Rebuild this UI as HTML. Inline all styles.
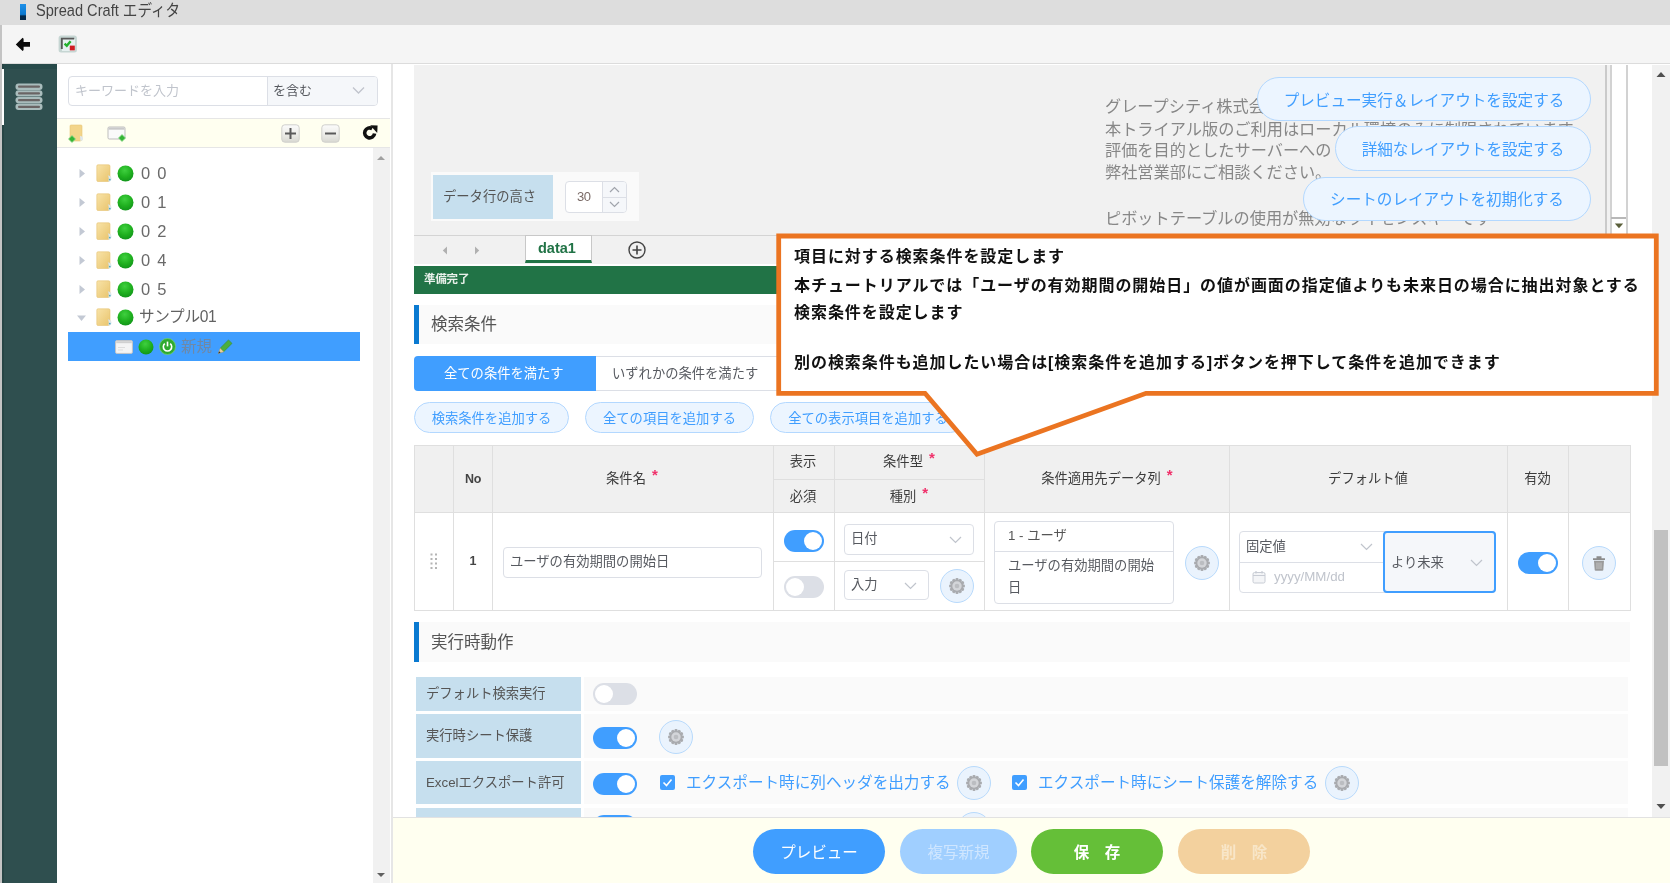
<!DOCTYPE html>
<html lang="ja">
<head>
<meta charset="utf-8">
<title>Spread Craft エディタ</title>
<style>
*{box-sizing:border-box;margin:0;padding:0}
html,body{width:1670px;height:883px;overflow:hidden;background:#fff}
body{position:relative;filter:blur(0.4px);font-family:"Liberation Sans","Noto Sans CJK JP",sans-serif;font-size:13px;color:#575a60}
.abs{position:absolute}
.t{position:absolute;white-space:nowrap;line-height:1}
/* title + toolbar */
#titlebar{left:0;top:0;width:1670px;height:25px;background:#dddddd}
#toolbar{left:0;top:25px;width:1670px;height:39px;background:#f5f5f5;border-bottom:1px solid #dcdcdc}
#sidebar{left:1.5px;top:64px;width:55.5px;height:819px;background:#2f4f4f}
#leftpanel{left:57px;top:64px;width:335.5px;height:819px;background:#fff;border-right:2.5px solid #e6e6e6}
#ytool{left:57px;top:118px;width:333px;height:30px;background:#fffff0;border-top:1px solid #e6e6e6;border-bottom:1px solid #e6e6e6}
#lscroll{left:372.5px;top:148px;width:17.5px;height:735px;background:#f1f1f1}
.pill{position:absolute;border:1px solid #b3d8ff;background:#ecf5ff;color:#409eff;border-radius:30px;text-align:center;white-space:nowrap}
.sw{position:absolute;width:40px;height:22px;border-radius:11px;background:#409eff}
.sw::after{content:"";position:absolute;top:2px;left:20px;width:18px;height:18px;border-radius:9px;background:#fff}
.sw.off{background:#dcdfe6}
.sw2{position:absolute;width:44px;height:22px;border-radius:11px;background:#409eff}
.sw2::after{content:"";position:absolute;top:2px;left:24px;width:18px;height:18px;border-radius:9px;background:#fff}
.sw2.off{background:#dcdfe6}
.sw2.off::after{left:2px}
.sw.off::after{left:2px}
.gear{position:absolute;width:34px;height:34px;border-radius:17px;border:1px solid #b8dafc;background:#eaf3fd;margin:-1px 0 0 -1px}
.co{font-size:16px;font-weight:bold;color:#111;letter-spacing:0.94px}
.inp{position:absolute;border:1px solid #dcdfe6;border-radius:4px;background:#fff}
</style>
</head>
<body>
<!-- TITLE BAR -->
<div id="titlebar" class="abs"></div>
<div class="abs" style="left:20px;top:4px;width:6px;height:16px;background:linear-gradient(#1e90e8 0,#0a78d0 65%,#04294a 75%,#04294a 100%)"></div>
<div class="t" style="left:36px;top:3px;font-size:14.6px;color:#444;transform:scaleY(1.12);transform-origin:50% 50%">Spread Craft エディタ</div>
<!-- TOOLBAR -->
<div id="toolbar" class="abs"></div>
<!-- SIDEBAR -->
<div id="sidebar" class="abs"></div>
<div id="leftpanel" class="abs"></div>
<div id="ytool" class="abs"></div>
<div id="lscroll" class="abs"></div>

<!-- left edge -->
<div class="abs" style="left:0;top:25px;width:1.5px;height:858px;background:#c4c4c4"></div>
<div class="abs" style="left:1.5px;top:63.5px;width:55.5px;height:5px;background:#274a4a"></div>
<div class="abs" style="left:1.5px;top:64px;width:2px;height:819px;background:#274545"></div>
<div class="abs" style="left:1.5px;top:69px;width:2.5px;height:56px;background:#fff"></div>
<!-- back arrow -->
<svg class="abs" style="left:14px;top:36px" width="18" height="17" viewBox="14 36 18 17"><path d="M15.8 44.4 L22.6 37.8 L23.6 38.8 L23.6 42 L30 42 L30 46.8 L23.6 46.8 L23.6 50 L22.6 51 Z" fill="#0c0c0c"/></svg>
<!-- check icon -->
<svg class="abs" style="left:58px;top:35px" width="20" height="18" viewBox="58 35 20 18">
<rect x="58.6" y="35.4" width="18.3" height="17.1" rx="2.5" fill="#c6d6d3"/>
<rect x="62" y="39" width="13" height="12" fill="#e6f0f0"/>
<path d="M61.8 49 V38.6 H74.2" fill="none" stroke="#585858" stroke-width="1.9"/>
<path d="M64.6 43.6 L66.8 45.8 L70.6 41.2" fill="none" stroke="#22b02c" stroke-width="2.4"/>
<rect x="69.8" y="45.6" width="5" height="4.8" fill="#d01c24"/>
</svg>
<!-- hamburger -->
<svg class="abs" style="left:15px;top:83px" width="28" height="28" viewBox="0 0 28 28">
<g fill="#a9bcbc"><rect x="0.5" y="0.5" width="27" height="6.4" rx="3"/><rect x="0.5" y="7.2" width="27" height="6.4" rx="3"/><rect x="0.5" y="13.9" width="27" height="6.4" rx="3"/><rect x="0.5" y="20.6" width="27" height="6.4" rx="3"/></g>
<g fill="#6a6464"><rect x="3" y="2.6" width="22" height="2.2" rx="1"/><rect x="3" y="9.3" width="22" height="2.2" rx="1"/><rect x="3" y="16" width="22" height="2.2" rx="1"/><rect x="3" y="22.7" width="22" height="2.2" rx="1"/></g>
</svg>
<!-- search box -->
<div class="inp" style="left:68px;top:76px;width:310px;height:30px;border-color:#dcdfe6"></div>
<div class="abs" style="left:267px;top:77px;width:110px;height:28px;background:#f5f7fa;border-left:1px solid #dcdfe6;border-radius:0 3px 3px 0"></div>
<div class="t" style="left:75px;top:84px;font-size:13px;color:#c0c4cc">キーワードを入力</div>
<div class="t" style="left:273px;top:84px;font-size:13px;color:#575a60">を含む</div>
<svg class="abs" style="left:352px;top:86px" width="13" height="9" viewBox="0 0 13 9"><path d="M1 1.5 L6.5 7 L12 1.5" fill="none" stroke="#c0c4cc" stroke-width="1.3"/></svg>
<!-- yellow toolbar icons -->
<svg class="abs" style="left:67px;top:124px" width="20" height="20" viewBox="0 0 20 20">
<path d="M4 1 H14 Q15 1 15 2 V15 Q15 17 13 17 H4 Q3 17 3 16 V2 Q3 1 4 1Z" fill="#f3d58a" stroke="#e8c877" stroke-width="0.6"/>
<path d="M13 12 Q16 12 16 15 Q16 17 13.5 17 Z" fill="#dfe8ee"/>
<path d="M5 11.5 L8.5 15 L5 18.5 L1.5 15 Z" fill="#35b535" stroke="#8fd88f" stroke-width="0.8"/>
</svg>
<svg class="abs" style="left:107px;top:126px" width="21" height="17" viewBox="0 0 21 17">
<rect x="1" y="1" width="17" height="12" rx="1.2" fill="#fafafa" stroke="#bdbdbd" stroke-width="1"/>
<rect x="1.5" y="1.5" width="16" height="2.2" fill="#c9c9c9"/>
<path d="M15 8.5 L18.5 12 L15 15.5 L11.5 12 Z" fill="#35b535" stroke="#8fd88f" stroke-width="0.8"/>
</svg>
<svg class="abs" style="left:281px;top:124px" width="19" height="19" viewBox="0 0 19 19"><rect x="0.8" y="0.8" width="17.4" height="17.4" rx="3" fill="url(#bg1)" stroke="#d0d0cc" stroke-width="1"/><path d="M4 9.5 H15 M9.5 4 V15" stroke="#5a5a5a" stroke-width="2"/></svg>
<svg class="abs" style="left:321px;top:124px" width="19" height="19" viewBox="0 0 19 19"><rect x="0.8" y="0.8" width="17.4" height="17.4" rx="3" fill="url(#bg1)" stroke="#d0d0cc" stroke-width="1"/><path d="M4 9.5 H15" stroke="#5a5a5a" stroke-width="2"/></svg>
<svg class="abs" style="left:361px;top:124px" width="18" height="18" viewBox="0 0 18 18"><path d="M13.6 9.6 A5 5 0 1 1 11.2 4.6" fill="none" stroke="#111" stroke-width="3.6"/><path d="M9.2 1.2 L16.6 1.6 L16.2 9 Z" fill="#111"/></svg>
<!-- left scrollbar arrows -->
<svg class="abs" style="left:376px;top:154px" width="10" height="8" viewBox="0 0 10 8"><path d="M1 6 L5 2 L9 6 Z" fill="#a0a0a0"/></svg>
<svg class="abs" style="left:376px;top:871px" width="10" height="8" viewBox="0 0 10 8"><path d="M1 2 L5 6 L9 2 Z" fill="#606060"/></svg>

<svg width="0" height="0" style="position:absolute"><defs>
<radialGradient id="gg" cx="0.45" cy="0.3" r="0.7"><stop offset="0" stop-color="#3fd03f"/><stop offset="0.6" stop-color="#1fb01f"/><stop offset="1" stop-color="#12961a"/></radialGradient>
<linearGradient id="fg" x1="0" y1="0" x2="1" y2="1"><stop offset="0" stop-color="#f8e3a8"/><stop offset="1" stop-color="#e9c46c"/></linearGradient>
<linearGradient id="bg1" x1="0" y1="0" x2="0" y2="1"><stop offset="0" stop-color="#fbfbfb"/><stop offset="0.5" stop-color="#eeeeea"/><stop offset="1" stop-color="#d8d8d2"/></linearGradient>
</defs></svg>
<svg class="abs" style="left:78px;top:168px" width="8" height="11" viewBox="0 0 8 11"><path d="M1.5 1 L1.5 10 L7 5.5 Z" fill="#c3c9d4"/></svg>
<svg class="abs" style="left:96px;top:164px" width="17" height="19" viewBox="0 0 17 19"><path d="M2 0.8 H12.5 Q14 0.8 14 2.2 V15.5 Q14 17.5 12 17.5 H2 Q0.8 17.5 0.8 16.3 V2 Q0.8 0.8 2 0.8Z" fill="url(#fg)" stroke="#e6c272" stroke-width="0.6"/><path d="M12.2 11.5 Q15.4 12 15.2 15 Q15 17.3 12.6 17.3 Q13.6 14.5 12.2 11.5Z" fill="#e3edf2" stroke="#c9d6dc" stroke-width="0.4"/><circle cx="13.8" cy="15.6" r="0.9" fill="#4aa8c8"/></svg>
<svg class="abs" style="left:117px;top:165px" width="17" height="17" viewBox="0 0 17 17"><circle cx="8.5" cy="8.5" r="8" fill="url(#gg)"/></svg>
<div class="t" style="left:141px;top:165px;font-size:16.5px;color:#6a6a6a;word-spacing:2.5px">0 0</div>
<svg class="abs" style="left:78px;top:197px" width="8" height="11" viewBox="0 0 8 11"><path d="M1.5 1 L1.5 10 L7 5.5 Z" fill="#c3c9d4"/></svg>
<svg class="abs" style="left:96px;top:193px" width="17" height="19" viewBox="0 0 17 19"><path d="M2 0.8 H12.5 Q14 0.8 14 2.2 V15.5 Q14 17.5 12 17.5 H2 Q0.8 17.5 0.8 16.3 V2 Q0.8 0.8 2 0.8Z" fill="url(#fg)" stroke="#e6c272" stroke-width="0.6"/><path d="M12.2 11.5 Q15.4 12 15.2 15 Q15 17.3 12.6 17.3 Q13.6 14.5 12.2 11.5Z" fill="#e3edf2" stroke="#c9d6dc" stroke-width="0.4"/><circle cx="13.8" cy="15.6" r="0.9" fill="#4aa8c8"/></svg>
<svg class="abs" style="left:117px;top:194px" width="17" height="17" viewBox="0 0 17 17"><circle cx="8.5" cy="8.5" r="8" fill="url(#gg)"/></svg>
<div class="t" style="left:141px;top:194px;font-size:16.5px;color:#6a6a6a;word-spacing:2.5px">0 1</div>
<svg class="abs" style="left:78px;top:226px" width="8" height="11" viewBox="0 0 8 11"><path d="M1.5 1 L1.5 10 L7 5.5 Z" fill="#c3c9d4"/></svg>
<svg class="abs" style="left:96px;top:222px" width="17" height="19" viewBox="0 0 17 19"><path d="M2 0.8 H12.5 Q14 0.8 14 2.2 V15.5 Q14 17.5 12 17.5 H2 Q0.8 17.5 0.8 16.3 V2 Q0.8 0.8 2 0.8Z" fill="url(#fg)" stroke="#e6c272" stroke-width="0.6"/><path d="M12.2 11.5 Q15.4 12 15.2 15 Q15 17.3 12.6 17.3 Q13.6 14.5 12.2 11.5Z" fill="#e3edf2" stroke="#c9d6dc" stroke-width="0.4"/><circle cx="13.8" cy="15.6" r="0.9" fill="#4aa8c8"/></svg>
<svg class="abs" style="left:117px;top:223px" width="17" height="17" viewBox="0 0 17 17"><circle cx="8.5" cy="8.5" r="8" fill="url(#gg)"/></svg>
<div class="t" style="left:141px;top:223px;font-size:16.5px;color:#6a6a6a;word-spacing:2.5px">0 2</div>
<svg class="abs" style="left:78px;top:255px" width="8" height="11" viewBox="0 0 8 11"><path d="M1.5 1 L1.5 10 L7 5.5 Z" fill="#c3c9d4"/></svg>
<svg class="abs" style="left:96px;top:251px" width="17" height="19" viewBox="0 0 17 19"><path d="M2 0.8 H12.5 Q14 0.8 14 2.2 V15.5 Q14 17.5 12 17.5 H2 Q0.8 17.5 0.8 16.3 V2 Q0.8 0.8 2 0.8Z" fill="url(#fg)" stroke="#e6c272" stroke-width="0.6"/><path d="M12.2 11.5 Q15.4 12 15.2 15 Q15 17.3 12.6 17.3 Q13.6 14.5 12.2 11.5Z" fill="#e3edf2" stroke="#c9d6dc" stroke-width="0.4"/><circle cx="13.8" cy="15.6" r="0.9" fill="#4aa8c8"/></svg>
<svg class="abs" style="left:117px;top:252px" width="17" height="17" viewBox="0 0 17 17"><circle cx="8.5" cy="8.5" r="8" fill="url(#gg)"/></svg>
<div class="t" style="left:141px;top:252px;font-size:16.5px;color:#6a6a6a;word-spacing:2.5px">0 4</div>
<svg class="abs" style="left:78px;top:284px" width="8" height="11" viewBox="0 0 8 11"><path d="M1.5 1 L1.5 10 L7 5.5 Z" fill="#c3c9d4"/></svg>
<svg class="abs" style="left:96px;top:280px" width="17" height="19" viewBox="0 0 17 19"><path d="M2 0.8 H12.5 Q14 0.8 14 2.2 V15.5 Q14 17.5 12 17.5 H2 Q0.8 17.5 0.8 16.3 V2 Q0.8 0.8 2 0.8Z" fill="url(#fg)" stroke="#e6c272" stroke-width="0.6"/><path d="M12.2 11.5 Q15.4 12 15.2 15 Q15 17.3 12.6 17.3 Q13.6 14.5 12.2 11.5Z" fill="#e3edf2" stroke="#c9d6dc" stroke-width="0.4"/><circle cx="13.8" cy="15.6" r="0.9" fill="#4aa8c8"/></svg>
<svg class="abs" style="left:117px;top:281px" width="17" height="17" viewBox="0 0 17 17"><circle cx="8.5" cy="8.5" r="8" fill="url(#gg)"/></svg>
<div class="t" style="left:141px;top:281px;font-size:16.5px;color:#6a6a6a;word-spacing:2.5px">0 5</div>
<svg class="abs" style="left:76px;top:314px" width="11" height="8" viewBox="0 0 11 8"><path d="M1 1.5 L10 1.5 L5.5 7 Z" fill="#c3c9d4"/></svg>
<svg class="abs" style="left:96px;top:308px" width="17" height="19" viewBox="0 0 17 19"><path d="M2 0.8 H12.5 Q14 0.8 14 2.2 V15.5 Q14 17.5 12 17.5 H2 Q0.8 17.5 0.8 16.3 V2 Q0.8 0.8 2 0.8Z" fill="url(#fg)" stroke="#e6c272" stroke-width="0.6"/><path d="M12.2 11.5 Q15.4 12 15.2 15 Q15 17.3 12.6 17.3 Q13.6 14.5 12.2 11.5Z" fill="#e3edf2" stroke="#c9d6dc" stroke-width="0.4"/><circle cx="13.8" cy="15.6" r="0.9" fill="#4aa8c8"/></svg>
<svg class="abs" style="left:117px;top:309px" width="17" height="17" viewBox="0 0 17 17"><circle cx="8.5" cy="8.5" r="8" fill="url(#gg)"/></svg>
<div class="t" style="left:139px;top:309px;font-size:15.6px;color:#626262;letter-spacing:-0.3px">サンプル01</div>

<div class="abs" style="left:68px;top:332px;width:292px;height:29px;background:#409eff"></div>
<svg class="abs" style="left:115px;top:340px" width="18" height="14" viewBox="0 0 18 14"><rect x="0.6" y="0.6" width="16.8" height="12.8" rx="1.2" fill="#f4f4f4" stroke="#c4c4c4" stroke-width="1"/><rect x="1.2" y="1.2" width="15.6" height="2" fill="#d0d0d0"/><path d="M3 7.5 H10 M3 10 H8" stroke="#ddd" stroke-width="1"/></svg>
<svg class="abs" style="left:138px;top:339px" width="16" height="16" viewBox="0 0 16 16"><circle cx="8" cy="8" r="7.5" fill="url(#gg)"/></svg>
<svg class="abs" style="left:159px;top:338px" width="17" height="17" viewBox="0 0 17 17"><circle cx="8.5" cy="8.5" r="8" fill="#2faa2f" stroke="#6fd06f" stroke-width="0.8"/><path d="M5.8 5.6 A4.2 4.2 0 1 0 11.2 5.6" fill="none" stroke="#fff" stroke-width="1.6"/><path d="M8.5 3.6 V8.4" stroke="#fff" stroke-width="1.6"/></svg>
<div class="t" style="left:181px;top:339px;font-size:15.5px;color:#6f88a6">新規</div>
<svg class="abs" style="left:216px;top:337px" width="19" height="19" viewBox="0 0 19 19"><path d="M4.2 11.2 L12.5 2.9 L16 6.4 L7.7 14.7 Z" fill="#4caf3c" stroke="#3a8a2e" stroke-width="0.6"/><path d="M4.2 11.2 L7.7 14.7 L2.3 16.6 Z" fill="#e8cf9a" stroke="#b89a5a" stroke-width="0.5"/><path d="M2.3 16.6 L3.1 14.3 L4.6 15.8 Z" fill="#333"/></svg>


<!-- spread area -->
<div class="abs" style="left:414px;top:65px;width:1192px;height:170px;background:#f1f1f1"></div>
<div class="abs" style="left:1605px;top:65px;width:2px;height:170px;background:#cacaca"></div>
<div class="abs" style="left:1607px;top:65px;width:3px;height:170px;background:#f1f1f1"></div>
<div class="abs" style="left:1609.5px;top:65px;width:18px;height:170px;background:#fff;border-left:2px solid #d2d2d2;border-right:2px solid #d2d2d2"></div>
<div class="abs" style="left:1611px;top:217px;width:15px;height:2px;background:#b8b8b8"></div>
<svg class="abs" style="left:1614px;top:223px" width="10" height="6" viewBox="0 0 10 6"><path d="M0.8 0.5 L9.2 0.5 L5 5.3 Z" fill="#5a5f3a"/></svg>
<!-- gray text -->
<div class="t" style="left:1105px;top:98px;font-size:16.2px;color:#878787">グレープシティ株式会社</div>
<div class="t" style="left:1105px;top:120.5px;font-size:16.2px;color:#878787">本トライアル版のご利用はローカル環境のみに制限されています。</div>
<div class="t" style="left:1105px;top:142px;font-size:16.2px;color:#878787">評価を目的としたサーバーへの</div>
<div class="t" style="left:1105px;top:164px;font-size:16.2px;color:#878787">弊社営業部にご相談ください。</div>
<div class="t" style="left:1105px;top:209.5px;font-size:16.2px;color:#878787">ピボットテーブルの使用が無効なライセンスキーです</div>
<!-- right pills -->
<div class="pill" style="left:1257px;top:77px;width:334px;height:44px;line-height:45px;font-size:15.6px">プレビュー実行＆レイアウトを設定する</div>
<div class="pill" style="left:1335px;top:126px;width:256px;height:45px;line-height:45px;font-size:15.6px">詳細なレイアウトを設定する</div>
<div class="pill" style="left:1303px;top:177px;width:288px;height:44px;line-height:44px;font-size:15.6px">シートのレイアウトを初期化する</div>
<!-- data row height -->
<div class="abs" style="left:431px;top:172px;width:208px;height:49px;background:#fafafa"></div>
<div class="abs" style="left:433px;top:175px;width:120px;height:44px;background:#c6dfee"></div>
<div class="t" style="left:443px;top:190px;font-size:13.3px;color:#555">データ行の高さ</div>
<div class="inp" style="left:565px;top:181px;width:62px;height:32px"></div>
<div class="abs" style="left:602px;top:182px;width:24px;height:30px;background:#f5f7fa;border-left:1px solid #dcdfe6;border-radius:0 3px 3px 0"></div>
<div class="abs" style="left:603px;top:197px;width:23px;height:1px;background:#dcdfe6"></div>
<div class="t" style="left:577px;top:190px;font-size:13px;color:#7a6a66;letter-spacing:-0.5px">30</div>
<svg class="abs" style="left:609px;top:186px" width="11" height="7" viewBox="0 0 11 7"><path d="M1 6 L5.5 1.5 L10 6" fill="none" stroke="#a0a4ac" stroke-width="1.2"/></svg>
<svg class="abs" style="left:609px;top:201px" width="11" height="7" viewBox="0 0 11 7"><path d="M1 1 L5.5 5.5 L10 1" fill="none" stroke="#a0a4ac" stroke-width="1.2"/></svg>
<!-- tab strip -->
<div class="abs" style="left:414px;top:235px;width:365px;height:29px;background:#f1f1f1;border-top:1px solid #d4d4d4"></div>
<svg class="abs" style="left:442px;top:246px" width="6" height="9" viewBox="0 0 6 9"><path d="M5 0.5 L5 8.5 L0.8 4.5 Z" fill="#b0b0b0"/></svg>
<svg class="abs" style="left:474px;top:246px" width="6" height="9" viewBox="0 0 6 9"><path d="M1 0.5 L1 8.5 L5.2 4.5 Z" fill="#b0b0b0"/></svg>
<div class="abs" style="left:525px;top:235px;width:67px;height:28px;background:#fff;border:1px solid #c8c8c8;border-bottom:3px solid #217346"></div>
<div class="t" style="left:538px;top:241px;font-size:14.5px;font-weight:bold;color:#217346;letter-spacing:0">data1</div>
<svg class="abs" style="left:627px;top:240px" width="20" height="20" viewBox="0 0 20 20"><circle cx="10" cy="10" r="8" fill="none" stroke="#444" stroke-width="1.4"/><path d="M5.5 10 H14.5 M10 5.5 V14.5" stroke="#444" stroke-width="1.6"/></svg>
<!-- status bar -->
<div class="abs" style="left:414px;top:265.5px;width:365px;height:28px;background:#217346"></div>
<div class="t" style="left:424px;top:274px;font-size:11.5px;font-weight:bold;color:#e8f0ea;letter-spacing:-0.2px">準備完了</div>

<!-- section: search cond -->
<div class="abs" style="left:414px;top:305px;width:1216px;height:39px;background:#fafafa"></div>
<div class="abs" style="left:414px;top:305px;width:5px;height:39px;background:#0a7ad1"></div>
<div class="t" style="left:431px;top:316px;font-size:16.5px;color:#555">検索条件</div>
<!-- radio group -->
<div class="abs" style="left:414px;top:356px;width:182px;height:35px;background:#409eff;border-radius:4px 0 0 4px"></div>
<div class="t" style="left:444px;top:367px;font-size:13.3px;color:#fff">全ての条件を満たす</div>
<div class="abs" style="left:596px;top:356px;width:184px;height:35px;background:#fff;border:1px solid #dcdfe6;border-left:0;border-radius:0 4px 4px 0"></div>
<div class="t" style="left:612px;top:367px;font-size:13.3px;color:#575a60">いずれかの条件を満たす</div>
<!-- pills -->
<div class="pill" style="left:414px;top:402px;width:155px;height:31px;line-height:31px;font-size:13.3px">検索条件を追加する</div>
<div class="pill" style="left:585px;top:402px;width:169px;height:31px;line-height:31px;font-size:13.3px">全ての項目を追加する</div>
<div class="pill" style="left:770px;top:402px;width:196px;height:31px;line-height:31px;font-size:13.3px">全ての表示項目を追加する</div>
<!-- table -->
<div class="abs" style="left:414px;top:445px;width:1216px;height:68px;background:#f0f0f0"></div>
<div class="abs" style="left:414px;top:445px;width:1217px;height:1px;background:#dfdfdf"></div>
<div class="abs" style="left:414px;top:512px;width:1217px;height:1px;background:#dfdfdf"></div>
<div class="abs" style="left:414px;top:610px;width:1217px;height:1px;background:#dfdfdf"></div>
<div class="abs" style="left:773px;top:479px;width:211px;height:1px;background:#dfdfdf"></div>
<div class="abs" style="left:773px;top:561px;width:211px;height:1px;background:#dfdfdf"></div>
<div class="abs" style="left:414px;top:445px;width:1px;height:166px;background:#dfdfdf"></div>
<div class="abs" style="left:453px;top:445px;width:1px;height:166px;background:#dfdfdf"></div>
<div class="abs" style="left:492px;top:445px;width:1px;height:166px;background:#dfdfdf"></div>
<div class="abs" style="left:773px;top:445px;width:1px;height:166px;background:#dfdfdf"></div>
<div class="abs" style="left:834px;top:445px;width:1px;height:166px;background:#dfdfdf"></div>
<div class="abs" style="left:984px;top:445px;width:1px;height:166px;background:#dfdfdf"></div>
<div class="abs" style="left:1229px;top:445px;width:1px;height:166px;background:#dfdfdf"></div>
<div class="abs" style="left:1507px;top:445px;width:1px;height:166px;background:#dfdfdf"></div>
<div class="abs" style="left:1568px;top:445px;width:1px;height:166px;background:#dfdfdf"></div>
<div class="abs" style="left:1630px;top:445px;width:1px;height:166px;background:#dfdfdf"></div>
<div class="t" style="left:473px;top:479px;transform:translate(-50%,-50%);font-size:12.5px;color:#444;font-weight:bold;letter-spacing:-0.3px">No</div>
<div class="t" style="left:626px;top:479px;transform:translate(-50%,-50%);font-size:13.3px;color:#3c3c3c;">条件名<span style="position:absolute;left:100%;top:-5.5px;margin-left:6px;color:#f0306a;font-size:15px;font-weight:bold">*</span></div>
<div class="t" style="left:803px;top:462px;transform:translate(-50%,-50%);font-size:13.3px;color:#3c3c3c;">表示</div>
<div class="t" style="left:803px;top:497px;transform:translate(-50%,-50%);font-size:13.3px;color:#3c3c3c;">必須</div>
<div class="t" style="left:903px;top:462px;transform:translate(-50%,-50%);font-size:13.3px;color:#3c3c3c;">条件型<span style="position:absolute;left:100%;top:-5.5px;margin-left:6px;color:#f0306a;font-size:15px;font-weight:bold">*</span></div>
<div class="t" style="left:903px;top:497px;transform:translate(-50%,-50%);font-size:13.3px;color:#3c3c3c;">種別<span style="position:absolute;left:100%;top:-5.5px;margin-left:6px;color:#f0306a;font-size:15px;font-weight:bold">*</span></div>
<div class="t" style="left:1101px;top:479px;transform:translate(-50%,-50%);font-size:13.3px;color:#3c3c3c;">条件適用先データ列<span style="position:absolute;left:100%;top:-5.5px;margin-left:6px;color:#f0306a;font-size:15px;font-weight:bold">*</span></div>
<div class="t" style="left:1368px;top:479px;transform:translate(-50%,-50%);font-size:13.3px;color:#3c3c3c;">デフォルト値</div>
<div class="t" style="left:1537.5px;top:479px;transform:translate(-50%,-50%);font-size:13.3px;color:#3c3c3c;">有効</div>
<svg class="abs" style="left:430px;top:553px" width="8" height="17" viewBox="0 0 8 17"><rect x="0.5" y="0.5" width="2" height="2" fill="#b4b4b4"/><rect x="0.5" y="5" width="2" height="2" fill="#b4b4b4"/><rect x="0.5" y="9.5" width="2" height="2" fill="#b4b4b4"/><rect x="0.5" y="14" width="2" height="2" fill="#b4b4b4"/><rect x="5" y="0.5" width="2" height="2" fill="#b4b4b4"/><rect x="5" y="5" width="2" height="2" fill="#b4b4b4"/><rect x="5" y="9.5" width="2" height="2" fill="#b4b4b4"/><rect x="5" y="14" width="2" height="2" fill="#b4b4b4"/></svg>
<div class="t" style="left:473px;top:561px;transform:translate(-50%,-50%);font-size:12.5px;color:#444;font-weight:bold">1</div>
<div class="inp" style="left:503px;top:547px;width:259px;height:31px"></div>
<div class="t" style="left:510px;top:555px;font-size:13.3px;color:#575a60">ユーザの有効期間の開始日</div>
<div class="sw" style="left:784px;top:530px"></div>
<div class="sw off" style="left:784px;top:576px"></div>
<div class="inp" style="left:844px;top:524px;width:130px;height:31px"></div>
<div class="t" style="left:851px;top:532px;font-size:13.3px;color:#575a60">日付</div>
<svg class="abs" style="left:948.5px;top:536px" width="13" height="8" viewBox="0 0 13 8"><path d="M1 1 L6.5 6.5 L12 1" fill="none" stroke="#c0c4cc" stroke-width="1.2"/></svg>
<div class="inp" style="left:844px;top:570px;width:85px;height:30px"></div>
<div class="t" style="left:851px;top:578px;font-size:13.3px;color:#575a60">入力</div>
<svg class="abs" style="left:903.5px;top:582px" width="13" height="8" viewBox="0 0 13 8"><path d="M1 1 L6.5 6.5 L12 1" fill="none" stroke="#c0c4cc" stroke-width="1.2"/></svg>
<div class="gear" style="left:940.5px;top:569.5px"><svg width="18" height="18" viewBox="-9 -9 18 18" style="position:absolute;left:7px;top:7px"><g fill="#a9abaf"><rect x="-1.5" y="-7.9" width="3" height="3.4" rx="1" transform="rotate(0)"/><rect x="-1.5" y="-7.9" width="3" height="3.4" rx="1" transform="rotate(30)"/><rect x="-1.5" y="-7.9" width="3" height="3.4" rx="1" transform="rotate(60)"/><rect x="-1.5" y="-7.9" width="3" height="3.4" rx="1" transform="rotate(90)"/><rect x="-1.5" y="-7.9" width="3" height="3.4" rx="1" transform="rotate(120)"/><rect x="-1.5" y="-7.9" width="3" height="3.4" rx="1" transform="rotate(150)"/><rect x="-1.5" y="-7.9" width="3" height="3.4" rx="1" transform="rotate(180)"/><rect x="-1.5" y="-7.9" width="3" height="3.4" rx="1" transform="rotate(210)"/><rect x="-1.5" y="-7.9" width="3" height="3.4" rx="1" transform="rotate(240)"/><rect x="-1.5" y="-7.9" width="3" height="3.4" rx="1" transform="rotate(270)"/><rect x="-1.5" y="-7.9" width="3" height="3.4" rx="1" transform="rotate(300)"/><rect x="-1.5" y="-7.9" width="3" height="3.4" rx="1" transform="rotate(330)"/></g><circle r="6.4" fill="#a9abaf"/><circle r="4.7" fill="#d3d5d9"/><circle r="2.3" fill="#bbbdc1"/></svg></div>
<div class="inp" style="left:994px;top:521px;width:180px;height:83px"></div>
<div class="abs" style="left:995px;top:551px;width:178px;height:1px;background:#dcdfe6"></div>
<div class="t" style="left:1008px;top:529px;font-size:13.3px;color:#555">1 - ユーザ</div>
<div class="t" style="left:1008px;top:559px;font-size:13.3px;color:#575a60">ユーザの有効期間の開始</div>
<div class="t" style="left:1008px;top:581px;font-size:13.3px;color:#575a60">日</div>
<div class="gear" style="left:1185.5px;top:547px"><svg width="18" height="18" viewBox="-9 -9 18 18" style="position:absolute;left:7px;top:7px"><g fill="#a9abaf"><rect x="-1.5" y="-7.9" width="3" height="3.4" rx="1" transform="rotate(0)"/><rect x="-1.5" y="-7.9" width="3" height="3.4" rx="1" transform="rotate(30)"/><rect x="-1.5" y="-7.9" width="3" height="3.4" rx="1" transform="rotate(60)"/><rect x="-1.5" y="-7.9" width="3" height="3.4" rx="1" transform="rotate(90)"/><rect x="-1.5" y="-7.9" width="3" height="3.4" rx="1" transform="rotate(120)"/><rect x="-1.5" y="-7.9" width="3" height="3.4" rx="1" transform="rotate(150)"/><rect x="-1.5" y="-7.9" width="3" height="3.4" rx="1" transform="rotate(180)"/><rect x="-1.5" y="-7.9" width="3" height="3.4" rx="1" transform="rotate(210)"/><rect x="-1.5" y="-7.9" width="3" height="3.4" rx="1" transform="rotate(240)"/><rect x="-1.5" y="-7.9" width="3" height="3.4" rx="1" transform="rotate(270)"/><rect x="-1.5" y="-7.9" width="3" height="3.4" rx="1" transform="rotate(300)"/><rect x="-1.5" y="-7.9" width="3" height="3.4" rx="1" transform="rotate(330)"/></g><circle r="6.4" fill="#a9abaf"/><circle r="4.7" fill="#d3d5d9"/><circle r="2.3" fill="#bbbdc1"/></svg></div>
<div class="inp" style="left:1239px;top:531px;width:257px;height:62px"></div>
<div class="abs" style="left:1240px;top:562px;width:144px;height:1px;background:#dcdfe6"></div>
<div class="t" style="left:1246px;top:540px;font-size:13.3px;color:#575a60">固定値</div>
<svg class="abs" style="left:1359.5px;top:543px" width="13" height="8" viewBox="0 0 13 8"><path d="M1 1 L6.5 6.5 L12 1" fill="none" stroke="#c0c4cc" stroke-width="1.2"/></svg>
<svg class="abs" style="left:1252px;top:570px" width="14" height="14" viewBox="0 0 14 14"><rect x="1" y="2.5" width="12" height="10.5" rx="1.5" fill="#f4f5f7" stroke="#c8ccd4" stroke-width="1"/><path d="M1 5.5 H13" stroke="#c8ccd4"/><path d="M4 1 V3.5 M10 1 V3.5" stroke="#c8ccd4" stroke-width="1.2"/></svg>
<div class="t" style="left:1274px;top:570px;font-size:13.3px;color:#c0c4cc">yyyy/MM/dd</div>
<div class="abs" style="left:1383px;top:531px;width:113px;height:62px;background:#f5f7fa;border:2px solid #409eff;border-radius:4px"></div>
<div class="t" style="left:1391px;top:556px;font-size:13.3px;color:#575a60">より未来</div>
<svg class="abs" style="left:1469.5px;top:559px" width="13" height="8" viewBox="0 0 13 8"><path d="M1 1 L6.5 6.5 L12 1" fill="none" stroke="#c0c4cc" stroke-width="1.2"/></svg>
<div class="sw" style="left:1518px;top:552px"></div>
<div class="gear" style="left:1582.5px;top:547px"><svg width="16" height="18" viewBox="0 0 16 18" style="position:absolute;left:8px;top:7px"><path d="M2 4.2 H14 V6 H2Z M5.5 2.2 H10.5 V4.2 H5.5Z" fill="#8c8c8c"/><path d="M3 6.8 H13 L12.3 16 Q12.2 16.8 11.4 16.8 H4.6 Q3.8 16.8 3.7 16 Z" fill="#9a9a9a"/><path d="M6 8.5 V15 M8 8.5 V15 M10 8.5 V15" stroke="#c8c8c8" stroke-width="0.9"/></svg></div>

<!-- run section -->
<div class="abs" style="left:414px;top:622px;width:1216px;height:40px;background:#fafafa"></div>
<div class="abs" style="left:414px;top:622px;width:5px;height:40px;background:#0a7ad1"></div>
<div class="t" style="left:431px;top:634px;font-size:16.5px;color:#555">実行時動作</div>
<div class="abs" style="left:416px;top:677px;width:165px;height:34px;background:#c6dfee"></div>
<div class="abs" style="left:584px;top:677px;width:1044px;height:34px;background:#fafafa"></div>
<div class="t" style="left:426px;top:687.0px;font-size:13.3px;color:#555">デフォルト検索実行</div>
<div class="abs" style="left:416px;top:714px;width:165px;height:44px;background:#c6dfee"></div>
<div class="abs" style="left:584px;top:714px;width:1044px;height:44px;background:#fafafa"></div>
<div class="t" style="left:426px;top:729.0px;font-size:13.3px;color:#555">実行時シート保護</div>
<div class="abs" style="left:416px;top:761px;width:165px;height:43px;background:#c6dfee"></div>
<div class="abs" style="left:584px;top:761px;width:1044px;height:43px;background:#fafafa"></div>
<div class="t" style="left:426px;top:775.5px;font-size:13.3px;color:#555">Excelエクスポート許可</div>
<div class="abs" style="left:416px;top:808px;width:165px;height:12px;background:#c6dfee"></div>
<div class="abs" style="left:584px;top:808px;width:1044px;height:12px;background:#fafafa"></div>
<div class="sw2 off" style="left:593px;top:683px"></div>
<div class="sw2" style="left:593px;top:726.5px"></div>
<div class="sw2" style="left:593px;top:772.5px"></div>
<div class="sw2" style="left:593px;top:815px"></div>
<div class="gear" style="left:660px;top:721px"><svg width="18" height="18" viewBox="-9 -9 18 18" style="position:absolute;left:7px;top:7px"><g fill="#a9abaf"><rect x="-1.5" y="-7.9" width="3" height="3.4" rx="1" transform="rotate(0)"/><rect x="-1.5" y="-7.9" width="3" height="3.4" rx="1" transform="rotate(30)"/><rect x="-1.5" y="-7.9" width="3" height="3.4" rx="1" transform="rotate(60)"/><rect x="-1.5" y="-7.9" width="3" height="3.4" rx="1" transform="rotate(90)"/><rect x="-1.5" y="-7.9" width="3" height="3.4" rx="1" transform="rotate(120)"/><rect x="-1.5" y="-7.9" width="3" height="3.4" rx="1" transform="rotate(150)"/><rect x="-1.5" y="-7.9" width="3" height="3.4" rx="1" transform="rotate(180)"/><rect x="-1.5" y="-7.9" width="3" height="3.4" rx="1" transform="rotate(210)"/><rect x="-1.5" y="-7.9" width="3" height="3.4" rx="1" transform="rotate(240)"/><rect x="-1.5" y="-7.9" width="3" height="3.4" rx="1" transform="rotate(270)"/><rect x="-1.5" y="-7.9" width="3" height="3.4" rx="1" transform="rotate(300)"/><rect x="-1.5" y="-7.9" width="3" height="3.4" rx="1" transform="rotate(330)"/></g><circle r="6.4" fill="#a9abaf"/><circle r="4.7" fill="#d3d5d9"/><circle r="2.3" fill="#bbbdc1"/></svg></div>
<svg class="abs" style="left:660px;top:775px" width="15" height="15" viewBox="0 0 15 15"><rect width="15" height="15" rx="2" fill="#409eff"/><path d="M3.5 7.5 L6.5 10.5 L11.5 4.5" fill="none" stroke="#fff" stroke-width="1.6"/></svg>
<div class="t" style="left:686px;top:775px;font-size:15.6px;color:#409eff">エクスポート時に列ヘッダを出力する</div>
<div class="gear" style="left:957.5px;top:767px"><svg width="18" height="18" viewBox="-9 -9 18 18" style="position:absolute;left:7px;top:7px"><g fill="#a9abaf"><rect x="-1.5" y="-7.9" width="3" height="3.4" rx="1" transform="rotate(0)"/><rect x="-1.5" y="-7.9" width="3" height="3.4" rx="1" transform="rotate(30)"/><rect x="-1.5" y="-7.9" width="3" height="3.4" rx="1" transform="rotate(60)"/><rect x="-1.5" y="-7.9" width="3" height="3.4" rx="1" transform="rotate(90)"/><rect x="-1.5" y="-7.9" width="3" height="3.4" rx="1" transform="rotate(120)"/><rect x="-1.5" y="-7.9" width="3" height="3.4" rx="1" transform="rotate(150)"/><rect x="-1.5" y="-7.9" width="3" height="3.4" rx="1" transform="rotate(180)"/><rect x="-1.5" y="-7.9" width="3" height="3.4" rx="1" transform="rotate(210)"/><rect x="-1.5" y="-7.9" width="3" height="3.4" rx="1" transform="rotate(240)"/><rect x="-1.5" y="-7.9" width="3" height="3.4" rx="1" transform="rotate(270)"/><rect x="-1.5" y="-7.9" width="3" height="3.4" rx="1" transform="rotate(300)"/><rect x="-1.5" y="-7.9" width="3" height="3.4" rx="1" transform="rotate(330)"/></g><circle r="6.4" fill="#a9abaf"/><circle r="4.7" fill="#d3d5d9"/><circle r="2.3" fill="#bbbdc1"/></svg></div>
<svg class="abs" style="left:1012px;top:775px" width="15" height="15" viewBox="0 0 15 15"><rect width="15" height="15" rx="2" fill="#409eff"/><path d="M3.5 7.5 L6.5 10.5 L11.5 4.5" fill="none" stroke="#fff" stroke-width="1.6"/></svg>
<div class="t" style="left:1038px;top:775px;font-size:15.6px;color:#409eff">エクスポート時にシート保護を解除する</div>
<div class="gear" style="left:1325.5px;top:767px"><svg width="18" height="18" viewBox="-9 -9 18 18" style="position:absolute;left:7px;top:7px"><g fill="#a9abaf"><rect x="-1.5" y="-7.9" width="3" height="3.4" rx="1" transform="rotate(0)"/><rect x="-1.5" y="-7.9" width="3" height="3.4" rx="1" transform="rotate(30)"/><rect x="-1.5" y="-7.9" width="3" height="3.4" rx="1" transform="rotate(60)"/><rect x="-1.5" y="-7.9" width="3" height="3.4" rx="1" transform="rotate(90)"/><rect x="-1.5" y="-7.9" width="3" height="3.4" rx="1" transform="rotate(120)"/><rect x="-1.5" y="-7.9" width="3" height="3.4" rx="1" transform="rotate(150)"/><rect x="-1.5" y="-7.9" width="3" height="3.4" rx="1" transform="rotate(180)"/><rect x="-1.5" y="-7.9" width="3" height="3.4" rx="1" transform="rotate(210)"/><rect x="-1.5" y="-7.9" width="3" height="3.4" rx="1" transform="rotate(240)"/><rect x="-1.5" y="-7.9" width="3" height="3.4" rx="1" transform="rotate(270)"/><rect x="-1.5" y="-7.9" width="3" height="3.4" rx="1" transform="rotate(300)"/><rect x="-1.5" y="-7.9" width="3" height="3.4" rx="1" transform="rotate(330)"/></g><circle r="6.4" fill="#a9abaf"/><circle r="4.7" fill="#d3d5d9"/><circle r="2.3" fill="#bbbdc1"/></svg></div>
<div class="gear" style="left:957.5px;top:813px"><svg width="18" height="18" viewBox="-9 -9 18 18" style="position:absolute;left:7px;top:7px"><g fill="#a9abaf"><rect x="-1.5" y="-7.9" width="3" height="3.4" rx="1" transform="rotate(0)"/><rect x="-1.5" y="-7.9" width="3" height="3.4" rx="1" transform="rotate(30)"/><rect x="-1.5" y="-7.9" width="3" height="3.4" rx="1" transform="rotate(60)"/><rect x="-1.5" y="-7.9" width="3" height="3.4" rx="1" transform="rotate(90)"/><rect x="-1.5" y="-7.9" width="3" height="3.4" rx="1" transform="rotate(120)"/><rect x="-1.5" y="-7.9" width="3" height="3.4" rx="1" transform="rotate(150)"/><rect x="-1.5" y="-7.9" width="3" height="3.4" rx="1" transform="rotate(180)"/><rect x="-1.5" y="-7.9" width="3" height="3.4" rx="1" transform="rotate(210)"/><rect x="-1.5" y="-7.9" width="3" height="3.4" rx="1" transform="rotate(240)"/><rect x="-1.5" y="-7.9" width="3" height="3.4" rx="1" transform="rotate(270)"/><rect x="-1.5" y="-7.9" width="3" height="3.4" rx="1" transform="rotate(300)"/><rect x="-1.5" y="-7.9" width="3" height="3.4" rx="1" transform="rotate(330)"/></g><circle r="6.4" fill="#a9abaf"/><circle r="4.7" fill="#d3d5d9"/><circle r="2.3" fill="#bbbdc1"/></svg></div>

<!-- main scrollbar -->
<div class="abs" style="left:1652px;top:65px;width:18px;height:752px;background:#f1f1f1"></div>
<div class="abs" style="left:1654px;top:530px;width:14px;height:236px;background:#c1c1c1"></div>
<svg class="abs" style="left:1656px;top:71px" width="10" height="7" viewBox="0 0 10 7"><path d="M0.5 6 L5 1 L9.5 6 Z" fill="#505050"/></svg>
<svg class="abs" style="left:1656px;top:803px" width="10" height="7" viewBox="0 0 10 7"><path d="M0.5 1 L5 6 L9.5 1 Z" fill="#505050"/></svg>
<!-- bottom bar -->
<div class="abs" style="left:393px;top:816.5px;width:1277px;height:67px;background:#fffff0;border-top:1px solid #e2e2e2"></div>
<div class="abs" style="left:753px;top:829px;width:132px;height:45px;border-radius:23px;background:#409eff;color:#fff;text-align:center;line-height:47px;font-size:15.5px;white-space:nowrap;">プレビュー</div>
<div class="abs" style="left:900px;top:829px;width:117px;height:45px;border-radius:23px;background:#a0cfff;color:#fff;text-align:center;line-height:47px;font-size:15.5px;white-space:nowrap;color:#cfe6ff">複写新規</div>
<div class="abs" style="left:1031px;top:829px;width:132px;height:45px;border-radius:23px;background:#67c23a;color:#fff;text-align:center;line-height:47px;font-size:15.5px;white-space:nowrap;font-weight:bold;background:#65bf38">保　存</div>
<div class="abs" style="left:1178px;top:829px;width:132px;height:45px;border-radius:23px;background:#f3d19e;color:#fff;text-align:center;line-height:47px;font-size:15.5px;white-space:nowrap;font-weight:bold;color:#f8e6c8">削　除</div>

<!-- callout -->
<svg class="abs" style="left:770px;top:228px" width="895" height="235" viewBox="770 228 895 235"><path d="M778.7 236 H1656.3 V393.3 H1146 L977 454.3 L925 393.3 H778.7 Z" fill="#fff" stroke="#eb7421" stroke-width="4.8" stroke-linejoin="miter"/></svg>
<div class="t co" style="left:794px;top:249px">項目に対する検索条件を設定します</div>
<div class="t co" style="left:794px;top:278px">本チュートリアルでは「ユーザの有効期間の開始日」の値が画面の指定値よりも未来日の場合に抽出対象とする</div>
<div class="t co" style="left:794px;top:304.5px">検索条件を設定します</div>
<div class="t co" style="left:794px;top:355px">別の検索条件も追加したい場合は[検索条件を追加する]ボタンを押下して条件を追加できます</div>



</body>
</html>
